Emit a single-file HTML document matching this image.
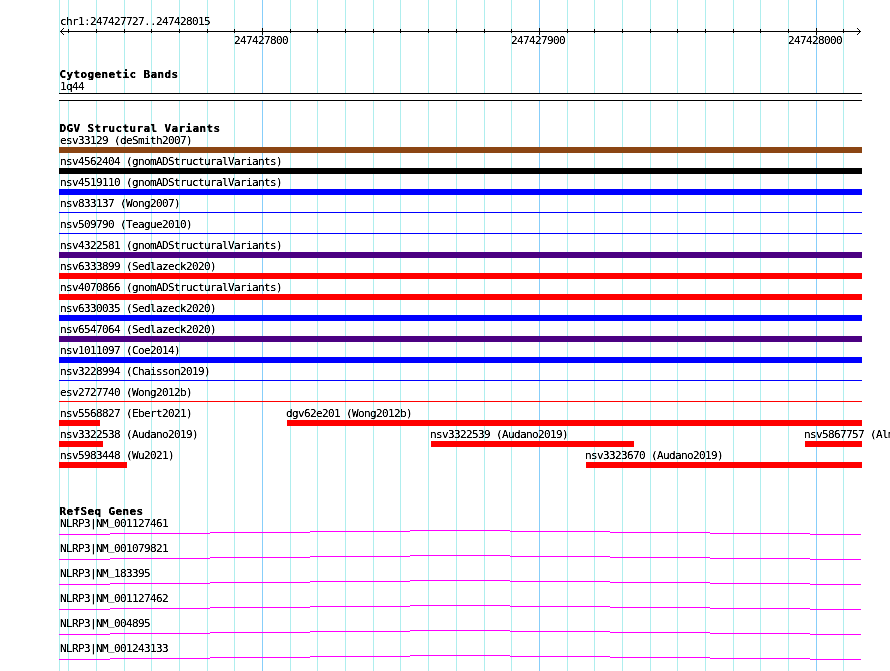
<!DOCTYPE html>
<html lang="en"><head><meta charset="utf-8"><title>chr1:247427727..247428015</title>
<style>
html,body{margin:0;padding:0;background:#fff;overflow:hidden}
svg{display:block}
text{font-family:"DejaVu Sans Mono","Liberation Mono",monospace;font-size:11px;fill:#000;white-space:pre}
.b{font-weight:bold;stroke:#000;stroke-width:0.15px}
</style></head><body>
<svg width="890" height="671" viewBox="0 0 890 671" shape-rendering="crispEdges">
<rect x="0" y="0" width="890" height="671" fill="#ffffff"/>
<g id="grid">
<rect x="59" y="0" width="1" height="671" fill="#afeeee"/>
<rect x="68" y="0" width="1" height="671" fill="#afeeee"/>
<rect x="96" y="0" width="1" height="671" fill="#afeeee"/>
<rect x="124" y="0" width="1" height="671" fill="#afeeee"/>
<rect x="151" y="0" width="1" height="671" fill="#afeeee"/>
<rect x="179" y="0" width="1" height="671" fill="#afeeee"/>
<rect x="207" y="0" width="1" height="671" fill="#afeeee"/>
<rect x="234" y="0" width="1" height="671" fill="#afeeee"/>
<rect x="262" y="0" width="1" height="671" fill="#87cefa"/>
<rect x="290" y="0" width="1" height="671" fill="#afeeee"/>
<rect x="317" y="0" width="1" height="671" fill="#afeeee"/>
<rect x="345" y="0" width="1" height="671" fill="#afeeee"/>
<rect x="373" y="0" width="1" height="671" fill="#afeeee"/>
<rect x="400" y="0" width="1" height="671" fill="#afeeee"/>
<rect x="428" y="0" width="1" height="671" fill="#afeeee"/>
<rect x="456" y="0" width="1" height="671" fill="#afeeee"/>
<rect x="484" y="0" width="1" height="671" fill="#afeeee"/>
<rect x="511" y="0" width="1" height="671" fill="#afeeee"/>
<rect x="539" y="0" width="1" height="671" fill="#87cefa"/>
<rect x="567" y="0" width="1" height="671" fill="#afeeee"/>
<rect x="594" y="0" width="1" height="671" fill="#afeeee"/>
<rect x="622" y="0" width="1" height="671" fill="#afeeee"/>
<rect x="650" y="0" width="1" height="671" fill="#afeeee"/>
<rect x="677" y="0" width="1" height="671" fill="#afeeee"/>
<rect x="705" y="0" width="1" height="671" fill="#afeeee"/>
<rect x="733" y="0" width="1" height="671" fill="#afeeee"/>
<rect x="760" y="0" width="1" height="671" fill="#afeeee"/>
<rect x="788" y="0" width="1" height="671" fill="#afeeee"/>
<rect x="816" y="0" width="1" height="671" fill="#87cefa"/>
<rect x="843" y="0" width="1" height="671" fill="#afeeee"/>
</g>
<g id="ruler">
<rect x="60" y="31" width="801" height="1" fill="#000"/>
<rect x="61" y="30" width="1" height="1" fill="#000"/>
<rect x="61" y="32" width="1" height="1" fill="#000"/>
<rect x="859" y="30" width="1" height="1" fill="#000"/>
<rect x="859" y="32" width="1" height="1" fill="#000"/>
<rect x="62" y="29" width="1" height="1" fill="#000"/>
<rect x="62" y="33" width="1" height="1" fill="#000"/>
<rect x="858" y="29" width="1" height="1" fill="#000"/>
<rect x="858" y="33" width="1" height="1" fill="#000"/>
<rect x="63" y="28" width="1" height="1" fill="#000"/>
<rect x="63" y="34" width="1" height="1" fill="#000"/>
<rect x="857" y="28" width="1" height="1" fill="#000"/>
<rect x="857" y="34" width="1" height="1" fill="#000"/>
<rect x="68" y="29" width="1" height="4" fill="#000"/>
<rect x="96" y="29" width="1" height="4" fill="#000"/>
<rect x="124" y="29" width="1" height="4" fill="#000"/>
<rect x="151" y="29" width="1" height="4" fill="#000"/>
<rect x="179" y="29" width="1" height="4" fill="#000"/>
<rect x="207" y="29" width="1" height="4" fill="#000"/>
<rect x="234" y="29" width="1" height="4" fill="#000"/>
<rect x="262" y="28" width="1" height="7" fill="#000"/>
<rect x="290" y="29" width="1" height="4" fill="#000"/>
<rect x="317" y="29" width="1" height="4" fill="#000"/>
<rect x="345" y="29" width="1" height="4" fill="#000"/>
<rect x="373" y="29" width="1" height="4" fill="#000"/>
<rect x="400" y="29" width="1" height="4" fill="#000"/>
<rect x="428" y="29" width="1" height="4" fill="#000"/>
<rect x="456" y="29" width="1" height="4" fill="#000"/>
<rect x="484" y="29" width="1" height="4" fill="#000"/>
<rect x="511" y="29" width="1" height="4" fill="#000"/>
<rect x="539" y="28" width="1" height="7" fill="#000"/>
<rect x="567" y="29" width="1" height="4" fill="#000"/>
<rect x="594" y="29" width="1" height="4" fill="#000"/>
<rect x="622" y="29" width="1" height="4" fill="#000"/>
<rect x="650" y="29" width="1" height="4" fill="#000"/>
<rect x="677" y="29" width="1" height="4" fill="#000"/>
<rect x="705" y="29" width="1" height="4" fill="#000"/>
<rect x="733" y="29" width="1" height="4" fill="#000"/>
<rect x="760" y="29" width="1" height="4" fill="#000"/>
<rect x="788" y="29" width="1" height="4" fill="#000"/>
<rect x="816" y="28" width="1" height="7" fill="#000"/>
<rect x="843" y="29" width="1" height="4" fill="#000"/>
</g>
<g id="cyto">
<rect x="59" y="93" width="803" height="8" fill="#fff"/>
<rect x="59" y="93" width="803" height="1" fill="#000"/>
<rect x="59" y="100" width="803" height="1" fill="#000"/>
</g>
<g id="dgv">
<rect x="59" y="147" width="803" height="6" fill="#8b4513"/>
<rect x="59" y="168" width="803" height="6" fill="#000000"/>
<rect x="59" y="189" width="803" height="6" fill="#0000ff"/>
<rect x="59" y="212" width="803" height="1" fill="#0000ff"/>
<rect x="59" y="233" width="803" height="1" fill="#0000ff"/>
<rect x="59" y="252" width="803" height="6" fill="#4b0082"/>
<rect x="59" y="273" width="803" height="6" fill="#ff0000"/>
<rect x="59" y="294" width="803" height="6" fill="#ff0000"/>
<rect x="59" y="315" width="803" height="6" fill="#0000ff"/>
<rect x="59" y="336" width="803" height="6" fill="#4b0082"/>
<rect x="59" y="357" width="803" height="6" fill="#0000ff"/>
<rect x="59" y="380" width="803" height="1" fill="#0000ff"/>
<rect x="59" y="401" width="803" height="1" fill="#ff0000"/>
<rect x="59" y="420" width="41" height="6" fill="#ff0000"/>
<rect x="287" y="420" width="575" height="6" fill="#ff0000"/>
<rect x="59" y="441" width="44" height="6" fill="#ff0000"/>
<rect x="431" y="441" width="203" height="6" fill="#ff0000"/>
<rect x="805" y="441" width="57" height="6" fill="#ff0000"/>
<rect x="59" y="462" width="68" height="6" fill="#ff0000"/>
<rect x="586" y="462" width="276" height="6" fill="#ff0000"/>
</g>
<g id="refseq">
<rect x="59" y="534" width="51" height="1" fill="#ff00ff"/>
<rect x="110" y="533" width="100" height="1" fill="#ff00ff"/>
<rect x="210" y="532" width="100" height="1" fill="#ff00ff"/>
<rect x="310" y="531" width="100" height="1" fill="#ff00ff"/>
<rect x="410" y="530" width="100" height="1" fill="#ff00ff"/>
<rect x="510" y="531" width="100" height="1" fill="#ff00ff"/>
<rect x="610" y="532" width="100" height="1" fill="#ff00ff"/>
<rect x="710" y="533" width="100" height="1" fill="#ff00ff"/>
<rect x="810" y="534" width="51" height="1" fill="#ff00ff"/>
<rect x="59" y="559" width="51" height="1" fill="#ff00ff"/>
<rect x="110" y="558" width="100" height="1" fill="#ff00ff"/>
<rect x="210" y="557" width="100" height="1" fill="#ff00ff"/>
<rect x="310" y="556" width="100" height="1" fill="#ff00ff"/>
<rect x="410" y="555" width="100" height="1" fill="#ff00ff"/>
<rect x="510" y="556" width="100" height="1" fill="#ff00ff"/>
<rect x="610" y="557" width="100" height="1" fill="#ff00ff"/>
<rect x="710" y="558" width="100" height="1" fill="#ff00ff"/>
<rect x="810" y="559" width="51" height="1" fill="#ff00ff"/>
<rect x="59" y="584" width="51" height="1" fill="#ff00ff"/>
<rect x="110" y="583" width="100" height="1" fill="#ff00ff"/>
<rect x="210" y="582" width="100" height="1" fill="#ff00ff"/>
<rect x="310" y="581" width="100" height="1" fill="#ff00ff"/>
<rect x="410" y="580" width="100" height="1" fill="#ff00ff"/>
<rect x="510" y="581" width="100" height="1" fill="#ff00ff"/>
<rect x="610" y="582" width="100" height="1" fill="#ff00ff"/>
<rect x="710" y="583" width="100" height="1" fill="#ff00ff"/>
<rect x="810" y="584" width="51" height="1" fill="#ff00ff"/>
<rect x="59" y="609" width="51" height="1" fill="#ff00ff"/>
<rect x="110" y="608" width="100" height="1" fill="#ff00ff"/>
<rect x="210" y="607" width="100" height="1" fill="#ff00ff"/>
<rect x="310" y="606" width="100" height="1" fill="#ff00ff"/>
<rect x="410" y="605" width="100" height="1" fill="#ff00ff"/>
<rect x="510" y="606" width="100" height="1" fill="#ff00ff"/>
<rect x="610" y="607" width="100" height="1" fill="#ff00ff"/>
<rect x="710" y="608" width="100" height="1" fill="#ff00ff"/>
<rect x="810" y="609" width="51" height="1" fill="#ff00ff"/>
<rect x="59" y="634" width="51" height="1" fill="#ff00ff"/>
<rect x="110" y="633" width="100" height="1" fill="#ff00ff"/>
<rect x="210" y="632" width="100" height="1" fill="#ff00ff"/>
<rect x="310" y="631" width="100" height="1" fill="#ff00ff"/>
<rect x="410" y="630" width="100" height="1" fill="#ff00ff"/>
<rect x="510" y="631" width="100" height="1" fill="#ff00ff"/>
<rect x="610" y="632" width="100" height="1" fill="#ff00ff"/>
<rect x="710" y="633" width="100" height="1" fill="#ff00ff"/>
<rect x="810" y="634" width="51" height="1" fill="#ff00ff"/>
<rect x="59" y="659" width="51" height="1" fill="#ff00ff"/>
<rect x="110" y="658" width="100" height="1" fill="#ff00ff"/>
<rect x="210" y="657" width="100" height="1" fill="#ff00ff"/>
<rect x="310" y="656" width="100" height="1" fill="#ff00ff"/>
<rect x="410" y="655" width="100" height="1" fill="#ff00ff"/>
<rect x="510" y="656" width="100" height="1" fill="#ff00ff"/>
<rect x="610" y="657" width="100" height="1" fill="#ff00ff"/>
<rect x="710" y="658" width="100" height="1" fill="#ff00ff"/>
<rect x="810" y="659" width="51" height="1" fill="#ff00ff"/>
</g>
<defs><filter id="px" x="0" y="0" width="890" height="671" filterUnits="userSpaceOnUse" color-interpolation-filters="sRGB"><feComponentTransfer><feFuncA type="table" tableValues="0 0.25 1 1"/></feComponentTransfer></filter></defs>
<g id="labels" filter="url(#px)">
<text x="60 66 72 78 84 90 96 102 108 114 120 126 132 138 144 150 156 162 168 174 180 186 192 198 204" y="25" xml:space="preserve">chr1:247427727..247428015</text>
<text x="234 240 246 252 258 264 270 276 282" y="44" xml:space="preserve">247427800</text>
<text x="511 517 523 529 535 541 547 553 559" y="44" xml:space="preserve">247427900</text>
<text x="788 794 800 806 812 818 824 830 836" y="44" xml:space="preserve">247428000</text>
<text x="59.5 66.5 73.5 80.5 87.5 94.5 101.5 108.5 115.5 122.5 129.5 136.5 143.5 150.5 157.5 164.5 171.5" y="78" class="b" xml:space="preserve">Cytogenetic Bands</text>
<text x="60 66 72 78" y="90" xml:space="preserve">1q44</text>
<text x="59.5 66.5 73.5 80.5 87.5 94.5 101.5 108.5 115.5 122.5 129.5 136.5 143.5 150.5 157.5 164.5 171.5 178.5 185.5 192.5 199.5 206.5 213.5" y="132" class="b" xml:space="preserve">DGV Structural Variants</text>
<text x="60 66 72 78 84 90 96 102 108 114 120 126 132 138 144 150 156 162 168 174 180 186" y="144" xml:space="preserve">esv33129 (deSmith2007)</text>
<text x="60 66 72 78 84 90 96 102 108 114 120 126 132 138 144 150 156 162 168 174 180 186 192 198 204 210 216 222 228 234 240 246 252 258 264 270 276" y="165" xml:space="preserve">nsv4562404 (gnomADStructuralVariants)</text>
<text x="60 66 72 78 84 90 96 102 108 114 120 126 132 138 144 150 156 162 168 174 180 186 192 198 204 210 216 222 228 234 240 246 252 258 264 270 276" y="186" xml:space="preserve">nsv4519110 (gnomADStructuralVariants)</text>
<text x="60 66 72 78 84 90 96 102 108 114 120 126 132 138 144 150 156 162 168 174" y="207" xml:space="preserve">nsv833137 (Wong2007)</text>
<text x="60 66 72 78 84 90 96 102 108 114 120 126 132 138 144 150 156 162 168 174 180 186" y="228" xml:space="preserve">nsv509790 (Teague2010)</text>
<text x="60 66 72 78 84 90 96 102 108 114 120 126 132 138 144 150 156 162 168 174 180 186 192 198 204 210 216 222 228 234 240 246 252 258 264 270 276" y="249" xml:space="preserve">nsv4322581 (gnomADStructuralVariants)</text>
<text x="60 66 72 78 84 90 96 102 108 114 120 126 132 138 144 150 156 162 168 174 180 186 192 198 204 210" y="270" xml:space="preserve">nsv6333899 (Sedlazeck2020)</text>
<text x="60 66 72 78 84 90 96 102 108 114 120 126 132 138 144 150 156 162 168 174 180 186 192 198 204 210 216 222 228 234 240 246 252 258 264 270 276" y="291" xml:space="preserve">nsv4070866 (gnomADStructuralVariants)</text>
<text x="60 66 72 78 84 90 96 102 108 114 120 126 132 138 144 150 156 162 168 174 180 186 192 198 204 210" y="312" xml:space="preserve">nsv6330035 (Sedlazeck2020)</text>
<text x="60 66 72 78 84 90 96 102 108 114 120 126 132 138 144 150 156 162 168 174 180 186 192 198 204 210" y="333" xml:space="preserve">nsv6547064 (Sedlazeck2020)</text>
<text x="60 66 72 78 84 90 96 102 108 114 120 126 132 138 144 150 156 162 168 174" y="354" xml:space="preserve">nsv1011097 (Coe2014)</text>
<text x="60 66 72 78 84 90 96 102 108 114 120 126 132 138 144 150 156 162 168 174 180 186 192 198 204" y="375" xml:space="preserve">nsv3228994 (Chaisson2019)</text>
<text x="60 66 72 78 84 90 96 102 108 114 120 126 132 138 144 150 156 162 168 174 180 186" y="396" xml:space="preserve">esv2727740 (Wong2012b)</text>
<text x="60 66 72 78 84 90 96 102 108 114 120 126 132 138 144 150 156 162 168 174 180 186" y="417" xml:space="preserve">nsv5568827 (Ebert2021)</text>
<text x="286 292 298 304 310 316 322 328 334 340 346 352 358 364 370 376 382 388 394 400 406" y="417" xml:space="preserve">dgv62e201 (Wong2012b)</text>
<text x="60 66 72 78 84 90 96 102 108 114 120 126 132 138 144 150 156 162 168 174 180 186 192" y="438" xml:space="preserve">nsv3322538 (Audano2019)</text>
<text x="430 436 442 448 454 460 466 472 478 484 490 496 502 508 514 520 526 532 538 544 550 556 562" y="438" xml:space="preserve">nsv3322539 (Audano2019)</text>
<text x="804 810 816 822 828 834 840 846 852 858 864 870 876 882 888 894 900 906 912 918 924 930 936 942" y="438" xml:space="preserve">nsv5867757 (Almarri2020)</text>
<text x="60 66 72 78 84 90 96 102 108 114 120 126 132 138 144 150 156 162 168" y="459" xml:space="preserve">nsv5983448 (Wu2021)</text>
<text x="585 591 597 603 609 615 621 627 633 639 645 651 657 663 669 675 681 687 693 699 705 711 717" y="459" xml:space="preserve">nsv3323670 (Audano2019)</text>
<text x="59.5 66.5 73.5 80.5 87.5 94.5 101.5 108.5 115.5 122.5 129.5 136.5" y="515" class="b" xml:space="preserve">RefSeq Genes</text>
<text x="60 66 72 78 84 90 96 102 108 114 120 126 132 138 144 150 156 162" y="527 527 527 527 527 527 527 527 525 527 527 527 527 527 527 527 527 527" xml:space="preserve">NLRP3|NM_001127461</text>
<text x="60 66 72 78 84 90 96 102 108 114 120 126 132 138 144 150 156 162" y="552 552 552 552 552 552 552 552 550 552 552 552 552 552 552 552 552 552" xml:space="preserve">NLRP3|NM_001079821</text>
<text x="60 66 72 78 84 90 96 102 108 114 120 126 132 138 144" y="577 577 577 577 577 577 577 577 575 577 577 577 577 577 577" xml:space="preserve">NLRP3|NM_183395</text>
<text x="60 66 72 78 84 90 96 102 108 114 120 126 132 138 144 150 156 162" y="602 602 602 602 602 602 602 602 600 602 602 602 602 602 602 602 602 602" xml:space="preserve">NLRP3|NM_001127462</text>
<text x="60 66 72 78 84 90 96 102 108 114 120 126 132 138 144" y="627 627 627 627 627 627 627 627 625 627 627 627 627 627 627" xml:space="preserve">NLRP3|NM_004895</text>
<text x="60 66 72 78 84 90 96 102 108 114 120 126 132 138 144 150 156 162" y="652 652 652 652 652 652 652 652 650 652 652 652 652 652 652 652 652 652" xml:space="preserve">NLRP3|NM_001243133</text>
</g>
</svg></body></html>
